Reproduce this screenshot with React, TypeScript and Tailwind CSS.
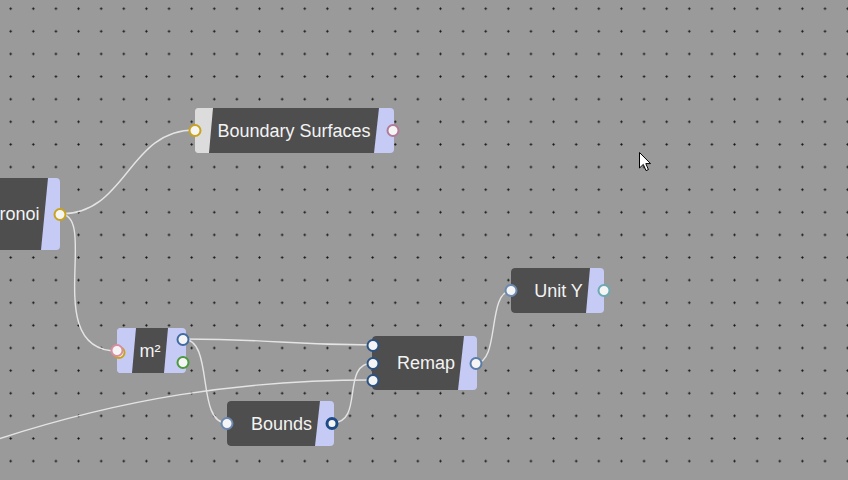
import React from "react";

function Port({ ring, under, big }: { ring: string; under?: string; big?: boolean }) {
  return (
    <div className="relative h-[13px] w-[13px] shrink-0">
      {under && <div className={`absolute left-[1.5px] top-[1.5px] h-[13px] w-[13px] rounded-full border-[2.5px] bg-[#f3f3f3] ${under}`} />}
      <div className={`absolute inset-0 rounded-full bg-[#f5f5f5] ${big ? "border-[3px]" : "border-[2.5px]"} ${ring}`} />
    </div>
  );
}

type NodeProps = {
  pos: string;
  label: React.ReactNode;
  leftTab?: string;
  body: string;
  rightTab: string;
  inputs?: React.ReactNode;
  inputsCol?: string;
  outputs?: React.ReactNode;
  outputsCol?: string;
};

function Node({ pos, label, leftTab, body, rightTab, inputs, inputsCol, outputs, outputsCol }: NodeProps) {
  return (
    <div className={`absolute ${pos}`}>
      <div className="flex h-full w-full overflow-hidden rounded-[4px] bg-[#c6cbf6]">
        {leftTab && <div className={`h-full shrink-0 ${leftTab}`} />}
        <div className={`flex h-full flex-1 items-center justify-center whitespace-nowrap bg-[#4e4e4e] text-[18px] leading-none text-[#f3f3f3] ${body}`}>
          {label}
        </div>
        <div className={`h-full shrink-0 ${rightTab}`} />
      </div>
      {inputs && (
        <div className={`absolute top-0 flex h-full -translate-x-1/2 flex-col items-center justify-center ${inputsCol ?? "left-0"}`}>
          {inputs}
        </div>
      )}
      {outputs && (
        <div className={`absolute top-0 flex h-full translate-x-1/2 flex-col items-center justify-center ${outputsCol ?? "right-0"}`}>
          {outputs}
        </div>
      )}
    </div>
  );
}

export default function App() {
  const wire = "#e4e4e4";
  return (
    <div className="relative h-[480px] w-[848px] overflow-hidden bg-[#9a9a9a] font-['Liberation_Sans',Arial,sans-serif]">
      <svg className="absolute inset-0" width={848} height={480}>
        <defs>
          <pattern id="grid" x={10.7 - 11.31} y={8.7 - 11.31} width={22.62} height={22.62} patternUnits="userSpaceOnUse">
            <rect x={10.31} y={10.81} width={2} height={1} fill="#222" />
            <rect x={10.81} y={10.31} width={1} height={2} fill="#222" />
            <circle cx={11.31} cy={11.31} r={0.95} fill="#111" />
          </pattern>
        </defs>
        <rect width={848} height={480} fill="url(#grid)" />
        <g fill="none" stroke={wire} strokeWidth={1.4}>
          <path d="M60,214 C128,214 127,130 195,130" />
          <path d="M60,214 C100,214 40,351 117,351" />
          <path d="M183,339 C280,339 280,345 373,345" />
          <path d="M183,339 C215,339 195,423 227,423" />
          <path d="M332,423 C365,423 340,363 373,363" />
          <path d="M-40,452 C120,395 250,380 373,380" />
          <path d="M476,363 C500,363 487,291 511,291" />
        </g>
      </svg>

      <Node
        pos="left-[195px] top-[108px] w-[199px] h-[45px]"
        label="Boundary Surfaces"
        leftTab="w-[18px] bg-[#dcdcdc]"
        body="-ml-[4px] [clip-path:polygon(4px_0,100%_0,calc(100%-5px)_100%,0_100%)]"
        rightTab="w-[15px]"
        inputs={<Port ring="border-[#c9a31c]" />}
        outputs={<Port ring="border-[#b07a98]" />}
        outputsCol="right-[1px]"
      />

      <Node
        pos="left-[-46px] top-[178px] w-[106px] h-[72px]"
        label="Voronoi"
        body="pl-[16px] [clip-path:polygon(0_0,100%_0,calc(100%-7px)_100%,0_100%)]"
        rightTab="w-[12px]"
        outputs={<Port ring="border-[#c9a31c]" />}
      />

      <Node
        pos="left-[117px] top-[328px] w-[69px] h-[45px]"
        label="m²"
        leftTab="w-[19px] bg-[#c6cbf6]"
        body="-ml-[4px] [clip-path:polygon(4px_0,100%_0,calc(100%-4px)_100%,0_100%)]"
        rightTab="w-[18px]"
        inputs={<Port ring="border-[#d98ea0]" under="border-[#c9a31c]" />}
        outputs={
          <div className="flex flex-col gap-[10px]">
            <Port ring="border-[#3f6aa2]" />
            <Port ring="border-[#4b9a3c]" />
          </div>
        }
        outputsCol="right-[3px]"
      />

      <Node
        pos="left-[372px] top-[336px] w-[105px] h-[54px]"
        label="Remap"
        body="pl-[16px] [clip-path:polygon(0_0,100%_0,calc(100%-6px)_100%,0_100%)]"
        rightTab="w-[13px]"
        inputs={
          <div className="flex flex-col gap-[4.5px]">
            <Port ring="border-[#2c5282]" />
            <Port ring="border-[#2c5282]" />
            <Port ring="border-[#2c5282]" />
          </div>
        }
        inputsCol="left-[1px]"
        outputs={<Port ring="border-[#5a7ca8]" />}
        outputsCol="right-[1px]"
      />

      <Node
        pos="left-[511px] top-[268px] w-[93px] h-[45px]"
        label="Unit Y"
        body="pl-[16px] [clip-path:polygon(0_0,100%_0,calc(100%-4px)_100%,0_100%)]"
        rightTab="w-[14px]"
        inputs={<Port ring="border-[#6a88b0]" />}
        outputs={<Port ring="border-[#6aaab0]" />}
      />

      <Node
        pos="left-[227px] top-[401px] w-[107px] h-[45px]"
        label="Bounds"
        body="pl-[16px] [clip-path:polygon(0_0,100%_0,calc(100%-5px)_100%,0_100%)]"
        rightTab="w-[14px]"
        inputs={<Port ring="border-[#6a88b0]" />}
        outputs={<Port ring="border-[#1e4a85]" big />}
        outputsCol="right-[2px]"
      />

      <svg className="absolute left-[639px] top-[152px]" width={13} height={20} viewBox="0 0 13 20">
        <path d="M0.5,0.5 L0.5,16 L4.3,12.4 L7,18.6 L9.4,17.6 L6.8,11.6 L11.5,11.6 Z" fill="#fff" stroke="#000" strokeWidth={1} />
      </svg>
    </div>
  );
}
